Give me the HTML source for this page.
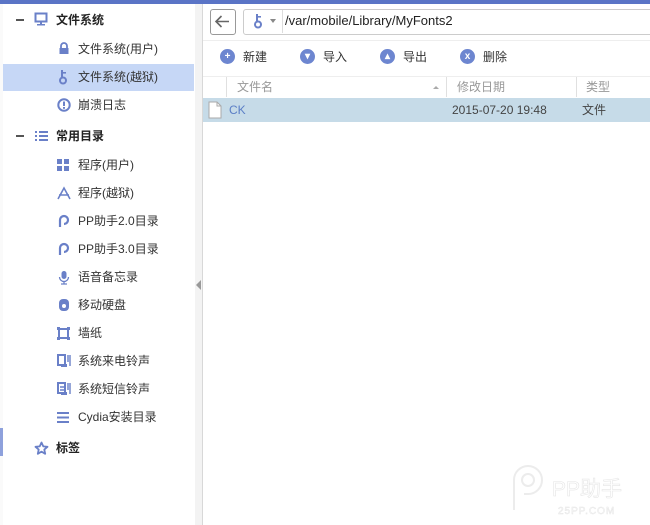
<!DOCTYPE html><html><head><meta charset="utf-8"><style>
body{margin:0;width:650px;height:525px;position:relative;overflow:hidden;background:#fff;font-family:"Liberation Sans","Noto Sans CJK SC",sans-serif;font-size:12px;color:#333}
.a{position:absolute}
.it{position:absolute;left:78px;font-size:12px;color:#333;line-height:16px}
.hd{position:absolute;left:56px;font-weight:bold;font-size:12px;color:#222;line-height:16px}
.bt{position:absolute;top:49px;width:15px;height:15px;border-radius:50%;background:#6d86d0;color:#fff;font-size:10px;line-height:15px;text-align:center;font-weight:bold}
.bl{position:absolute;top:49px;font-size:12px;color:#333;line-height:16px}
</style></head><body>
<div class="a" style="left:0;top:0;width:650px;height:4px;background:#5a74c6"></div>
<div class="a" style="left:0;top:4px;width:3px;height:521px;background:#fafafa"></div>
<div class="a" style="left:0;top:428px;width:3px;height:28px;background:#8ea1dc"></div>
<div class="a" style="left:195px;top:4px;width:7px;height:521px;background:#f3f3f3"></div>
<div class="a" style="left:202px;top:4px;width:1px;height:521px;background:#d8d8d8"></div>
<div class="a" style="left:196px;top:280px;width:0;height:0;border-top:5px solid transparent;border-bottom:5px solid transparent;border-right:5px solid #999"></div>
<div class="a" style="left:3px;top:64px;width:191px;height:27px;background:#c6d7f6"></div>

<div class="a" style="left:16px;top:19px;width:8px;height:2px;background:#555"></div>
<svg class="a" style="left:34px;top:12px" width="14" height="14"><rect x="1.5" y="1.5" width="11" height="8" fill="none" stroke="#6a80c8" stroke-width="2"/><rect x="6" y="10" width="2" height="3" fill="#6a80c8"/><rect x="3" y="12" width="8" height="1.5" fill="#6a80c8"/></svg>
<div class="hd" style="top:12px">文件系统</div>
<svg class="a" style="left:58px;top:42px" width="12" height="13"><path d="M3 6V4a3 3 0 0 1 6 0v2" fill="none" stroke="#6a80c8" stroke-width="1.8"/><rect x="1.5" y="6" width="9" height="6" fill="#6a80c8"/></svg>
<div class="it" style="top:41px">文件系统(用户)</div>
<svg class="a" style="left:58px;top:69px" width="12" height="16"><rect x="3" y="1" width="2" height="8" fill="#6a80c8"/><rect x="5" y="3" width="3" height="1.6" fill="#6a80c8"/><circle cx="5" cy="11.5" r="3" fill="none" stroke="#6a80c8" stroke-width="2"/></svg>
<div class="it" style="top:69px">文件系统(越狱)</div>
<svg class="a" style="left:57px;top:98px" width="14" height="14"><circle cx="7" cy="7" r="5.7" fill="none" stroke="#6a80c8" stroke-width="2"/><rect x="6" y="3.5" width="2" height="4.5" fill="#6a80c8"/><rect x="6" y="9" width="2" height="1.8" fill="#6a80c8"/></svg>
<div class="it" style="top:97px">崩溃日志</div>

<div class="a" style="left:16px;top:135px;width:8px;height:2px;background:#555"></div>
<svg class="a" style="left:35px;top:130px" width="13" height="12"><g fill="#6a80c8"><rect x="0" y="1" width="2" height="2"/><rect x="4" y="1" width="9" height="2"/><rect x="0" y="5" width="2" height="2"/><rect x="4" y="5" width="9" height="2"/><rect x="0" y="9" width="2" height="2"/><rect x="4" y="9" width="9" height="2"/></g></svg>
<div class="hd" style="top:128px">常用目录</div>

<svg class="a" style="left:57px;top:159px" width="12" height="12"><g fill="#6a80c8"><rect x="0" y="0" width="5" height="5"/><rect x="7" y="0" width="5" height="5"/><rect x="0" y="7" width="5" height="5"/><rect x="7" y="7" width="5" height="5"/></g></svg>
<div class="it" style="top:157px">程序(用户)</div>
<svg class="a" style="left:57px;top:186px" width="14" height="14"><path d="M1 13L7 2L13 13M2 9H12" fill="none" stroke="#6a80c8" stroke-width="1.6"/></svg>
<div class="it" style="top:185px">程序(越狱)</div>
<svg class="a" style="left:58px;top:214px" width="12" height="14"><path d="M2 13V6a4 4 0 1 1 4 4" fill="none" stroke="#6a80c8" stroke-width="2.2"/></svg>
<div class="it" style="top:213px">PP助手2.0目录</div>
<svg class="a" style="left:58px;top:242px" width="12" height="14"><path d="M2 13V6a4 4 0 1 1 4 4" fill="none" stroke="#6a80c8" stroke-width="2.2"/></svg>
<div class="it" style="top:241px">PP助手3.0目录</div>
<svg class="a" style="left:58px;top:270px" width="12" height="15"><rect x="3.5" y="1" width="5" height="8" rx="2.5" fill="#6a80c8"/><path d="M1.5 7a4.5 4.5 0 0 0 9 0M6 11.5V14M3 14h6" fill="none" stroke="#6a80c8" stroke-width="1.3"/></svg>
<div class="it" style="top:269px">语音备忘录</div>
<svg class="a" style="left:58px;top:298px" width="12" height="14"><rect x="1" y="1" width="10" height="12" rx="4" fill="#6a80c8"/><circle cx="6" cy="8" r="2" fill="#fff"/></svg>
<div class="it" style="top:297px">移动硬盘</div>
<svg class="a" style="left:57px;top:327px" width="13" height="13"><rect x="2" y="2" width="9" height="9" fill="none" stroke="#6a80c8" stroke-width="2"/><g fill="#6a80c8"><rect x="0" y="0" width="3" height="3"/><rect x="10" y="0" width="3" height="3"/><rect x="0" y="10" width="3" height="3"/><rect x="10" y="10" width="3" height="3"/></g></svg>
<div class="it" style="top:325px">墙纸</div>
<svg class="a" style="left:57px;top:354px" width="14" height="14"><path d="M1 1H8V11H1Z" fill="none" stroke="#6a80c8" stroke-width="2"/><path d="M11 1V8M13 1V12" stroke="#6a80c8" stroke-width="1.4"/><rect x="4" y="10" width="6" height="3" fill="#6a80c8"/></svg>
<div class="it" style="top:353px">系统来电铃声</div>
<svg class="a" style="left:57px;top:382px" width="14" height="14"><path d="M1 1H8V11H1Z" fill="none" stroke="#6a80c8" stroke-width="2"/><path d="M3 5h4M3 8h4M11 1V8M13 1V12" stroke="#6a80c8" stroke-width="1.4"/><rect x="4" y="10" width="6" height="3" fill="#6a80c8"/></svg>
<div class="it" style="top:381px">系统短信铃声</div>
<svg class="a" style="left:57px;top:412px" width="12" height="11"><g fill="#6a80c8"><rect y="0" width="12" height="2"/><rect y="4.5" width="12" height="2"/><rect y="9" width="12" height="2"/></g></svg>
<div class="it" style="top:409px">Cydia安装目录</div>
<svg class="a" style="left:34px;top:441px" width="15" height="14"><path d="M7.5 1.5L9.3 5.4L13.5 5.8L10.3 8.6L11.2 12.8L7.5 10.6L3.8 12.8L4.7 8.6L1.5 5.8L5.7 5.4Z" fill="none" stroke="#6a80c8" stroke-width="1.8" stroke-linejoin="round"/></svg>
<div class="hd" style="top:440px">标签</div>

<div class="a" style="left:210px;top:9px;width:24px;height:24px;border:1px solid #999;border-radius:3px;background:#fff"></div>
<svg class="a" style="left:214px;top:14px" width="17" height="15"><path d="M2 7.5H15M7.5 2L2 7.5L7.5 13" fill="none" stroke="#666" stroke-width="1.6"/></svg>
<div class="a" style="left:243px;top:9px;width:420px;height:24px;border:1px solid #ccc;border-radius:3px;background:#fff"></div>
<div class="a" style="left:282px;top:10px;width:1px;height:23px;background:#ddd"></div>
<svg class="a" style="left:253px;top:13px" width="11" height="16"><rect x="3" y="1" width="2" height="8" fill="#6a80c8"/><rect x="5" y="3" width="3" height="1.6" fill="#6a80c8"/><circle cx="5" cy="11.5" r="3" fill="none" stroke="#6a80c8" stroke-width="2"/></svg>
<div class="a" style="left:270px;top:19px;border-left:3.5px solid transparent;border-right:3.5px solid transparent;border-top:4px solid #888"></div>
<div class="a" style="left:285px;top:13px;font-size:13px;color:#222;line-height:16px">/var/mobile/Library/MyFonts2</div>
<div class="a" style="left:203px;top:40px;width:447px;height:1px;background:#eee"></div>

<div class="bt" style="left:220px">+</div><div class="bl" style="left:243px">新建</div>
<div class="bt" style="left:300px">▾</div><div class="bl" style="left:323px">导入</div>
<div class="bt" style="left:380px">▴</div><div class="bl" style="left:403px">导出</div>
<div class="bt" style="left:460px">x</div><div class="bl" style="left:483px">删除</div>

<div class="a" style="left:203px;top:76px;width:447px;height:21px;background:#fff;border-top:1px solid #eee"></div>
<div class="a" style="left:226px;top:77px;width:1px;height:20px;background:#e0e0e0"></div>
<div class="a" style="left:446px;top:77px;width:1px;height:20px;background:#e0e0e0"></div>
<div class="a" style="left:576px;top:77px;width:1px;height:20px;background:#e0e0e0"></div>
<div class="a" style="left:237px;top:79px;color:#999;line-height:16px">文件名</div>
<div class="a" style="left:433px;top:86px;border-left:3px solid transparent;border-right:3px solid transparent;border-bottom:3px solid #aaa"></div>
<div class="a" style="left:457px;top:79px;color:#999;line-height:16px">修改日期</div>
<div class="a" style="left:586px;top:79px;color:#999;line-height:16px">类型</div>
<div class="a" style="left:203px;top:98px;width:447px;height:24px;background:#c6dbe8"></div>
<svg class="a" style="left:208px;top:101px" width="14" height="18"><path d="M1 1H9L13 5V17H1Z" fill="#fff" stroke="#aaa"/><path d="M9 1V5H13" fill="none" stroke="#aaa"/></svg>
<div class="a" style="left:229px;top:102px;color:#5b7fc6;font-size:12px;line-height:16px">CK</div>
<div class="a" style="left:452px;top:102px;color:#444;line-height:16px">2015-07-20 19:48</div>
<div class="a" style="left:582px;top:102px;color:#444;line-height:16px">文件</div>

<svg class="a" style="left:510px;top:462px" width="36" height="52"><path d="M4 48V18a14 14 0 1 1 14 14h-4" fill="none" stroke="#ececec" stroke-width="2"/><circle cx="18" cy="18" r="6" fill="none" stroke="#ececec" stroke-width="2"/></svg>
<div class="a" style="left:552px;top:478px;font-size:21px;color:#fff;-webkit-text-stroke:0.6px #e6e6e6;line-height:24px">PP助手</div>
<div class="a" style="left:558px;top:506px;font-size:10px;color:#fff;-webkit-text-stroke:0.5px #e6e6e6;letter-spacing:1px">25PP.COM</div>
</body></html>
